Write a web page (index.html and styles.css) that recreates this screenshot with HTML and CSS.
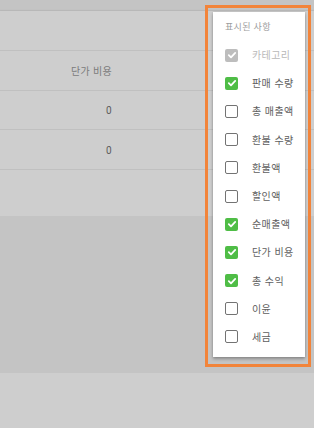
FILE: index.html
```html
<!DOCTYPE html>
<html lang="ko">
<head>
<meta charset="utf-8">
<link rel="stylesheet" href="styles.css">
</head>
<body>
<div class="page">
  <div class="topgap"></div>
  <div class="card">
    <div class="row toolbar"></div>
    <div class="row head"><div class="cell">단가 비용</div></div>
    <div class="row data r39"><div class="cell">0</div></div>
    <div class="row data"><div class="cell">0</div></div>
    <div class="row foot"></div>
  </div>
  <div class="backdrop"></div>
  <div class="bottom"></div>
</div>

<div class="highlight"></div>
<div class="menu">
  <div class="menu-title">표시된 사항</div>
  <div class="item disabled"><span class="box checked"><svg viewBox="0 0 12 12"><polyline points="2.8,6.2 5,8.3 9.2,3.9"/></svg></span><span class="label">카테고리</span></div>
  <div class="item"><span class="box checked"><svg viewBox="0 0 12 12"><polyline points="2.8,6.2 5,8.3 9.2,3.9"/></svg></span><span class="label">판매 수량</span></div>
  <div class="item"><span class="box"></span><span class="label">총 매출액</span></div>
  <div class="item"><span class="box"></span><span class="label">환불 수량</span></div>
  <div class="item"><span class="box"></span><span class="label">환불액</span></div>
  <div class="item"><span class="box"></span><span class="label">할인액</span></div>
  <div class="item"><span class="box checked"><svg viewBox="0 0 12 12"><polyline points="2.8,6.2 5,8.3 9.2,3.9"/></svg></span><span class="label">순매출액</span></div>
  <div class="item"><span class="box checked"><svg viewBox="0 0 12 12"><polyline points="2.8,6.2 5,8.3 9.2,3.9"/></svg></span><span class="label">단가 비용</span></div>
  <div class="item"><span class="box checked"><svg viewBox="0 0 12 12"><polyline points="2.8,6.2 5,8.3 9.2,3.9"/></svg></span><span class="label">총 수익</span></div>
  <div class="item"><span class="box"></span><span class="label">이윤</span></div>
  <div class="item"><span class="box"></span><span class="label">세금</span></div>
</div>
</body>
</html>
```

FILE: styles.css
```css
html, body {
  margin: 0;
  padding: 0;
}
body {
  width: 314px;
  height: 428px;
  overflow: hidden;
  background: #c4c4c4;
  font-family: "Noto Sans CJK KR", "Noto Sans", sans-serif;
  position: relative;
}
.page {
  display: flex;
  flex-direction: column;
}
.topgap {
  height: 11px;
}
.card {
  background: #cecece;
  box-shadow: 0 1px 2px rgba(0,0,0,0.12), 0 -1px 1px rgba(0,0,0,0.05);
  display: flex;
  flex-direction: column;
}
.row {
  box-sizing: border-box;
  height: 40px;
  border-bottom: 1px solid #c0c0c0;
  display: flex;
  align-items: center;
}
.row.r39 { height: 39px; }
.row.foot { height: 46px; border-bottom: none; }
.cell {
  width: 112px;
  text-align: right;
  font-size: 10px;
  line-height: 14px;
  letter-spacing: 0.3px;
}
.head .cell { color: #7b7b7b; }
.data .cell {
  color: #5c5c5c;
  font-family: Roboto, "Noto Sans CJK KR", sans-serif;
  padding-top: 2px;
}
.backdrop {
  height: 157px;
  background: #c4c4c4;
}
.bottom {
  height: 55px;
  background: #cecece;
}

.highlight {
  position: absolute;
  left: 205px;
  top: 5px;
  width: 106px;
  height: 362px;
  box-sizing: border-box;
  border: 3px solid #f2843a;
}
.menu {
  position: absolute;
  left: 213px;
  top: 12px;
  width: 92px;
  height: 345px;
  box-sizing: border-box;
  background: #ffffff;
  box-shadow: 0 2px 3px rgba(0,0,0,0.28), 0 0 2px rgba(0,0,0,0.12);
  padding: 0 0 8px 12px;
}
.menu-title {
  height: 29px;
  display: flex;
  align-items: center;
  font-size: 9px;
  color: #9c9c9c;
  padding-bottom: 1px;
  box-sizing: border-box;
  letter-spacing: 0.3px;
}
.item {
  height: 28.2px;
  display: flex;
  align-items: center;
  gap: 14px;
}
.box {
  width: 13px;
  height: 13px;
  box-sizing: border-box;
  border: 1.5px solid #737373;
  border-radius: 2px;
  background: #fff;
  display: flex;
  align-items: center;
  justify-content: center;
  flex: none;
}
.box.checked {
  border: none;
  background: #4fbd46;
}
.box svg {
  width: 12px;
  height: 12px;
}
.box svg polyline {
  fill: none;
  stroke: #ffffff;
  stroke-width: 1.8;
  stroke-linecap: round;
  stroke-linejoin: round;
}
.item.disabled .box.checked {
  background: #bdbdbd;
}
.label {
  font-size: 10px;
  color: #5e5e5e;
  line-height: 14px;
  white-space: nowrap;
  letter-spacing: 0.4px;
}
.item.disabled .label {
  color: #b9b9b9;
}
```
